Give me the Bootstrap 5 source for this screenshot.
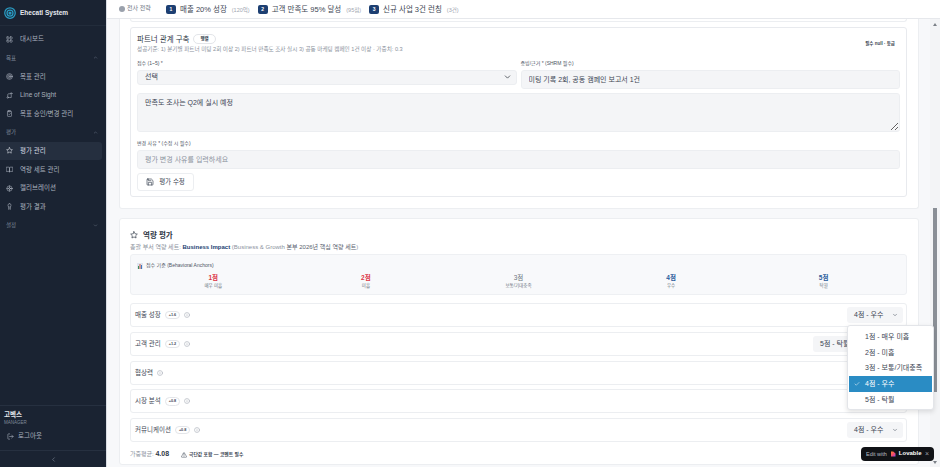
<!DOCTYPE html>
<html lang="ko">
<head>
  <meta charset="UTF-8" />
  <meta name="viewport" content="width=device-width, initial-scale=1" />
  <title>Ehecatl System</title>
  <link href="https://cdn.jsdelivr.net/npm/bootstrap@5.3.0/dist/css/bootstrap.min.css" rel="stylesheet" />
  <style>
    html, body { height: 467px; overflow: hidden; }
    body { font-family: "Liberation Sans", "Noto Sans CJK KR", sans-serif; font-size: 7px; color: #2a3342; background: #f7f8fa; line-height: 1.2; }
    svg.ico { fill: none; stroke: currentColor; stroke-width: 2; stroke-linecap: round; stroke-linejoin: round; flex: none; }

    /* sidebar */
    .side { width: 106px; flex: none; background: #1a2332; color: #aab2be; border-right: 1px solid #d9dde3; box-sizing: content-box; }
    .side-brand { height: 26px; padding-left: 4px; gap: 4px; border-bottom: 1px solid #222c3b; color: #e6e9ee; font-weight: 700; font-size: 6.5px; }
    .side-nav { padding-top: 4px; }
    .side-item { height: 18.6px; padding-left: 6px; gap: 7px; font-size: 6.5px; margin-right: 4px; }
    .side-item.on { background: #252f3f; border-radius: 0 3px 3px 0; color: #d5dae2; }
    .side-group { height: 18.6px; padding: 0 8px 0 6px; font-size: 5.5px; color: #7f8a9a; }
    .side-user { border-top: 1px solid #263040; padding: 5px 4px 0; }
    .side-name { color: #e3e7ed; font-size: 6.5px; font-weight: 700; }
    .side-role { color: #7f8a9a; font-size: 4.5px; margin-top: 1px; }
    .side-out { height: 18px; padding-left: 3px; gap: 4px; font-size: 6.5px; margin-top: 2px; margin-bottom: 5px; }
    .side-foot { border-top: 1px solid #263040; height: 17px; color: #7f8a9a; }

    /* top strip */
    .strip { height: 19px; flex: none; background: #fff; border-bottom: 1px solid #e6e8ec; padding-left: 12px; font-size: 7.5px; color: #3d4654; }
    .strip-dot { width: 6px; height: 6px; border-radius: 50%; background: #9aa1ac; margin-right: 2px; }
    .strip-lead { font-size: 6px; color: #6d7582; width: 39px; }
    .strip-num { width: 10px; height: 9px; border-radius: 2px; background: #1d3f72; color: #fff; font-size: 5px; font-weight: 700; margin-right: 4px; }
    .strip-goal { margin-right: 8px; }
    .strip-goal span { color: #a0a6b0; font-size: 5.5px; margin-left: 5px; }

    /* page */
    .scroll-area { min-height: 0; }
    .pane { padding: 0 0 0 12px; width: 823px; flex: none; }
    .outer { background: #fff; border: 1px solid #eceef1; border-radius: 3px; width: 800px; padding: 0 11px 0 10px; }
    .outer-a { border-top: 0; height: 190px; border-radius: 0 0 3px 3px; }
    .outer-b { margin-top: 9px; height: 247px; padding-top: 10px; }
    .stub { height: 3px; border: 1px solid #eceef1; border-top: 0; border-radius: 0 0 3px 3px; margin-bottom: 5px; }
    .inner { border: 1px solid #e8eaee; border-radius: 3px; height: 170px; padding: 6px 6px 0; position: relative; }
    .goal-title { font-size: 7.5px; color: #2f3846; gap: 4px; height: 10px; }
    .pill { border: 1px solid #e3e5e9; border-radius: 8px; font-size: 4.5px; padding: 1px 6px; font-weight: 700; color: #3d4654; }
    .goal-note { font-size: 5.6px; color: #8b929d; margin-top: 2px; }
    .goal-right { position: absolute; right: 11px; top: 13px; font-size: 4.5px; font-weight: 700; color: #3d4654; }
    .tiny-label { font-size: 5px; color: #4d5563; margin: 0; height: 7px; line-height: 7px; }
    .fields { margin-top: 7px; gap: 4px; }
    .fields > div { width: 380px; }
    .form-select.fld, .form-control.fld { background-color: #f4f5f7; border: 1px solid #eceef1; border-radius: 3px; font-size: 7px; color: #3d4654; padding: 0 7px; box-shadow: none; line-height: 1.2; }
    .form-select.fld { height: 15px; margin-top: 3px; background-size: 7px 6px; background-position: right 5px center; }
    .form-control.fld.tall { height: 19px; margin-top: 3px; }
    textarea.form-control.fld { height: 39px; min-height: 0; padding-top: 5px; margin-top: 1px; }
    .form-control.fld::placeholder { color: #8d94a0; }
    .change-label { margin-top: 8px; }
    .btn.save { height: 18px; width: 57px; margin-top: 4px; padding: 0; border: 1px solid #eceef1; background: #fff; color: #3d4654; font-size: 6.5px; border-radius: 3px; gap: 5px; }

    .rate-head { font-size: 7.5px; font-weight: 700; color: #2f3846; gap: 5px; height: 12px; }
    .rate-sub { font-size: 6px; color: #8b929d; margin-top: 2px; height: 8px; line-height: 8px; }
    .rate-sub b { color: #1d3f72; }
    .rate-sub i { font-style: normal; color: #59616e; }
    .anchors { margin-top: 3px; height: 41px; background: #f8f9fb; border: 1px solid #eef0f3; border-radius: 3px; padding: 7px 6px 0; }
    .anchors-title { font-size: 5px; color: #4d5563; gap: 3px; height: 7px; line-height: 7px; }
    .anchor-col { text-align: center; margin-top: 5px; }
    .anchor-score { font-size: 6.5px; font-weight: 700; height: 8px; line-height: 8px; }
    .anchor-name { font-size: 4.5px; color: #6d7582; height: 8px; line-height: 8px; }
    .skills { margin-top: 8px; gap: 4.8px; }
    .skill { height: 24px; border: 1px solid #eceef1; border-radius: 3px; padding: 0 3px 0 4px; font-size: 6.5px; color: #3d4654; gap: 4px; }
    .skill-w { border: 1px solid #e3e5e9; border-radius: 5px; font-size: 3.8px; font-weight: 700; padding: 1px 3px; }
    .skill-info { color: #9aa1ac; }
    .pick { margin-left: auto; width: 56px; height: 16px; background: #f4f5f7; border-radius: 3px; padding: 0 5px 0 7px; font-size: 7px; }
    .pick.wide { width: 90px; }
    .avg { margin-top: 8px; font-size: 6px; color: #8b929d; gap: 12px; height: 9px; }
    .avg b { font-size: 7px; color: #2f3846; }
    .avg-warn { font-size: 4.8px; font-weight: 700; color: #3d4654; gap: 2px; }

    /* fake scrollbar */
    .vbar { width: 10px; flex: none; margin-left: auto; background: #f3f4f6; position: relative; }
    .vbar-thumb { position: absolute; left: 3px; top: 189px; width: 4px; height: 184px; background: #8a8f96; }
    .vbar-up, .vbar-down { position: absolute; left: 3px; width: 0; height: 0; border-left: 2px solid transparent; border-right: 2px solid transparent; }
    .vbar-up { top: 4px; border-bottom: 3px solid #7b8087; }
    .vbar-down { bottom: 3px; border-top: 3px solid #7b8087; }

    /* open dropdown over the rows */
    .pick-menu { position: absolute; left: 847px; top: 325px; width: 87px; height: 85px; background: #fff; border: 1px solid #e3e5e9; border-radius: 3px; box-shadow: 0 2px 5px rgba(0,0,0,.12); padding: 3px 1px; z-index: 5; font-size: 7px; color: #3d4654; }
    .pick-opt { height: 15.8px; padding-left: 16px; position: relative; }
    .pick-opt.on { background: #2a8cc4; color: #fff; }
    .pick-opt svg { position: absolute; left: 5px; top: 5px; }
    .edit-badge { position: absolute; left: 861px; top: 447px; width: 73px; height: 14px; background: #101216; border-radius: 4px; color: #b9bdc4; font-size: 5.5px; padding: 0 5px; z-index: 6; gap: 3px; white-space: nowrap; }
    .edit-badge b { color: #fff; font-size: 6px; }
    .edit-x { margin-left: auto; color: #9a9ea5; font-size: 7px; }
  </style>
</head>
<body>
  <svg width="0" height="0" class="position-absolute">
    <symbol id="i-dash" viewBox="0 0 24 24"><rect x="3" y="3" width="7" height="7" rx="1"/><rect x="14" y="3" width="7" height="7" rx="1"/><rect x="3" y="14" width="7" height="7" rx="1"/><rect x="14" y="14" width="7" height="7" rx="1"/></symbol>
    <symbol id="i-target" viewBox="0 0 24 24"><circle cx="12" cy="12" r="10"/><circle cx="12" cy="12" r="6"/><circle cx="12" cy="12" r="2"/></symbol>
    <symbol id="i-sight" viewBox="0 0 24 24"><circle cx="6" cy="19" r="2.5"/><circle cx="18" cy="5" r="2.5"/><path d="M6 16V9a3 3 0 0 1 3-3h6"/><path d="M12 19h6v-9"/></symbol>
    <symbol id="i-file" viewBox="0 0 24 24"><rect x="5" y="4" width="14" height="18" rx="2"/><path d="M9 2h6v4H9z"/><path d="m9 14 2 2 4-4"/></symbol>
    <symbol id="i-star" viewBox="0 0 24 24"><path d="m12 2 3.1 6.3 6.9 1-5 4.9 1.2 6.8-6.2-3.2L5.8 21 7 14.200l-5-4.900 6.900-1z"/></symbol>
    <symbol id="i-book" viewBox="0 0 24 24"><path d="M2 4h7a3 3 0 0 1 3 3v14a2.500 2.500 0 0 0-2.500-2.500H2z"/><path d="M22 4h-7a3 3 0 0 0-3 3v14a2.500 2.500 0 0 1 2.500-2.500H22z"/></symbol>
    <symbol id="i-calib" viewBox="0 0 24 24"><circle cx="12" cy="12" r="9"/><circle cx="12" cy="12" r="3"/><path d="M3 12h6M15 12h6M12 3v6M12 15v6"/></symbol>
    <symbol id="i-award" viewBox="0 0 24 24"><rect x="7" y="2" width="10" height="12" rx="5"/><path d="M9 14v8l3-2 3 2v-8"/></symbol>
    <symbol id="i-up" viewBox="0 0 24 24"><path d="m6 15 6-6 6 6"/></symbol>
    <symbol id="i-down" viewBox="0 0 24 24"><path d="m6 9 6 6 6-6"/></symbol>
    <symbol id="i-left" viewBox="0 0 24 24"><path d="m15 18-6-6 6-6"/></symbol>
    <symbol id="i-out" viewBox="0 0 24 24"><path d="M9 21H5a2 2 0 0 1-2-2V5a2 2 0 0 1 2-2h4"/><path d="m16 17 5-5-5-5"/><path d="M21 12H9"/></symbol>
    <symbol id="i-save" viewBox="0 0 24 24"><path d="M5 3h11l5 5v11a2 2 0 0 1-2 2H5a2 2 0 0 1-2-2V5a2 2 0 0 1 2-2z"/><path d="M17 21v-8H7v8"/><path d="M7 3v5h8"/></symbol>
    <symbol id="i-info" viewBox="0 0 24 24"><circle cx="12" cy="12" r="10"/><path d="M12 16v-4M12 8h.01"/></symbol>
    <symbol id="i-warn" viewBox="0 0 24 24"><path d="M10.300 4 2 18a2 2 0 0 0 1.700 3h16.600a2 2 0 0 0 1.700-3L13.700 4a2 2 0 0 0-3.400 0z"/><path d="M12 9v4M12 17h.01"/></symbol>
    <symbol id="i-check" viewBox="0 0 24 24"><path d="M20 6 9 17l-5-5"/></symbol>
  </svg>

  <div class="d-flex h-100">
    <!-- Sidebar -->
    <aside class="side d-flex flex-column">
      <div class="side-brand d-flex align-items-center">
        <svg width="12" height="12" viewBox="0 0 24 24" fill="none" stroke="#2a9cc4" stroke-width="2.500"><circle cx="12" cy="12" r="10.500"/><circle cx="12" cy="12" r="6"/><circle cx="12" cy="12" r="2" fill="#2a9cc4"/></svg>
        Ehecatl System
      </div>
      <nav class="side-nav flex-grow-1">
        <div class="side-item d-flex align-items-center"><svg class="ico" width="7" height="7"><use href="#i-dash"/></svg>대시보드</div>
        <div class="side-group d-flex align-items-center justify-content-between">목표<svg class="ico" width="5" height="5"><use href="#i-up"/></svg></div>
        <div class="side-item d-flex align-items-center"><svg class="ico" width="7" height="7"><use href="#i-target"/></svg>목표 관리</div>
        <div class="side-item d-flex align-items-center"><svg class="ico" width="7" height="7"><use href="#i-sight"/></svg>Line of Sight</div>
        <div class="side-item d-flex align-items-center"><svg class="ico" width="7" height="7"><use href="#i-file"/></svg>목표 승인/변경 관리</div>
        <div class="side-group d-flex align-items-center justify-content-between">평가<svg class="ico" width="5" height="5"><use href="#i-up"/></svg></div>
        <div class="side-item on d-flex align-items-center"><svg class="ico" width="7" height="7"><use href="#i-star"/></svg>평가 관리</div>
        <div class="side-item d-flex align-items-center"><svg class="ico" width="7" height="7"><use href="#i-book"/></svg>역량 세트 관리</div>
        <div class="side-item d-flex align-items-center"><svg class="ico" width="7" height="7"><use href="#i-calib"/></svg>캘리브레이션</div>
        <div class="side-item d-flex align-items-center"><svg class="ico" width="7" height="7"><use href="#i-award"/></svg>평가 결과</div>
        <div class="side-group d-flex align-items-center justify-content-between">설정<svg class="ico" width="5" height="5"><use href="#i-down"/></svg></div>
      </nav>
      <div class="side-user">
        <div class="side-name">고벡스</div>
        <div class="side-role">MANAGER</div>
        <div class="side-out d-flex align-items-center"><svg class="ico" width="7" height="7"><use href="#i-out"/></svg>로그아웃</div>
      </div>
      <div class="side-foot d-flex align-items-center justify-content-center"><svg class="ico" width="7" height="7"><use href="#i-left"/></svg></div>
    </aside>

    <div class="flex-grow-1 d-flex flex-column" style="min-width:0">
      <!-- Strategy strip -->
      <div class="strip d-flex align-items-center">
        <span class="strip-dot"></span><span class="strip-lead">전사 전략</span>
        <span class="strip-num d-flex align-items-center justify-content-center">1</span><span class="strip-goal">매출 20% 성장<span>(120억)</span></span>
        <span class="strip-num d-flex align-items-center justify-content-center">2</span><span class="strip-goal">고객 만족도 95% 달성<span>(95점)</span></span>
        <span class="strip-num d-flex align-items-center justify-content-center">3</span><span class="strip-goal">신규 사업 3건 런칭<span>(3건)</span></span>
      </div>

      <div class="scroll-area flex-grow-1 d-flex">
        <main class="pane">
          <!-- Goal evaluation card -->
          <section class="outer outer-a">
            <div class="stub"></div>
            <div class="inner">
              <div class="goal-title d-flex align-items-center">파트너 관계 구축 <span class="pill">행렬</span></div>
              <div class="goal-note">성공기준: 1) 분기별 파트너 미팅 2회 이상 2) 파트너 만족도 조사 실시 3) 공동 마케팅 캠페인 1건 이상 · 가중치: 0.3</div>
              <div class="goal-right">필수 null · 등급</div>
              <div class="fields d-flex">
                <div>
                  <label class="tiny-label d-block">점수 (1~5) *</label>
                  <select class="form-select fld"><option>선택</option></select>
                </div>
                <div>
                  <label class="tiny-label d-block">증빙/근거 * (SHRM 필수)</label>
                  <input class="form-control fld tall" value="미팅 기록 2회, 공동 캠페인 보고서 1건" />
                </div>
              </div>
              <textarea class="form-control fld mt-1">만족도 조사는 Q2에 실시 예정</textarea>
              <label class="tiny-label d-block change-label">변경 사유 * (수정 시 필수)</label>
              <input class="form-control fld tall" placeholder="평가 변경 사유를 입력하세요" />
              <button class="btn save d-flex align-items-center justify-content-center"><svg class="ico" width="8" height="8"><use href="#i-save"/></svg>평가 수정</button>
            </div>
          </section>

          <!-- Competency evaluation card -->
          <section class="outer outer-b">
            <div class="rate-head d-flex align-items-center"><svg class="ico" width="8" height="8"><use href="#i-star"/></svg>역량 평가</div>
            <div class="rate-sub">총괄 부서 역량 세트: <b>Business Impact</b> (Business &amp; Growth <i>본부 2026년 핵심 역량 세트</i>)</div>
            <div class="anchors">
              <div class="anchors-title d-flex align-items-center">
                <svg width="6" height="6" viewBox="0 0 6 6"><rect width="6" height="6" fill="#dfe6f0"/><rect x="1" y="3" width="1" height="3" fill="#3f8f5f"/><rect x="2.500" y="1" width="1" height="5" fill="#c9503f"/><rect x="4" y="2" width="1" height="4" fill="#3b78c4"/></svg>
                점수 기준 (Behavioral Anchors)
              </div>
              <div class="row g-0">
                <div class="col anchor-col"><div class="anchor-score text-danger">1점</div><div class="anchor-name">매우 미흡</div></div>
                <div class="col anchor-col"><div class="anchor-score text-danger">2점</div><div class="anchor-name">미흡</div></div>
                <div class="col anchor-col"><div class="anchor-score text-secondary fw-normal">3점</div><div class="anchor-name">보통/기대충족</div></div>
                <div class="col anchor-col"><div class="anchor-score" style="color:#2a5c9c">4점</div><div class="anchor-name">우수</div></div>
                <div class="col anchor-col"><div class="anchor-score" style="color:#2a5c9c">5점</div><div class="anchor-name">탁월</div></div>
              </div>
            </div>
            <div class="skills d-flex flex-column">
              <div class="skill d-flex align-items-center">매출 성장 <span class="skill-w">+1.6</span><svg class="ico skill-info" width="6" height="6"><use href="#i-info"/></svg>
                <div class="pick d-flex align-items-center justify-content-between">4점 - 우수<svg class="ico" width="6" height="6"><use href="#i-down"/></svg></div></div>
              <div class="skill d-flex align-items-center">고객 관리 <span class="skill-w">+1.2</span><svg class="ico skill-info" width="6" height="6"><use href="#i-info"/></svg>
                <div class="pick wide d-flex align-items-center">5점 - 탁월</div></div>
              <div class="skill d-flex align-items-center">협상력 <svg class="ico skill-info" width="6" height="6"><use href="#i-info"/></svg></div>
              <div class="skill d-flex align-items-center">시장 분석 <span class="skill-w">+0.8</span><svg class="ico skill-info" width="6" height="6"><use href="#i-info"/></svg></div>
              <div class="skill d-flex align-items-center">커뮤니케이션 <span class="skill-w">+0.8</span><svg class="ico skill-info" width="6" height="6"><use href="#i-info"/></svg>
                <div class="pick d-flex align-items-center justify-content-between">4점 - 우수<svg class="ico" width="6" height="6"><use href="#i-down"/></svg></div></div>
            </div>
            <div class="avg d-flex align-items-center">
              <span>가중평균: <b>4.08</b></span>
              <span class="avg-warn d-flex align-items-center"><svg class="ico" width="6" height="6"><use href="#i-warn"/></svg>극단값 포함 — 코멘트 필수</span>
            </div>
          </section>
        </main>
        <div class="vbar"><span class="vbar-up"></span><span class="vbar-thumb"></span><span class="vbar-down"></span></div>
      </div>
    </div>
  </div>

  <!-- Open score dropdown -->
  <div class="pick-menu">
    <div class="pick-opt d-flex align-items-center">1점 - 매우 미흡</div>
    <div class="pick-opt d-flex align-items-center">2점 - 미흡</div>
    <div class="pick-opt d-flex align-items-center">3점 - 보통/기대충족</div>
    <div class="pick-opt on d-flex align-items-center"><svg class="ico" width="6" height="6"><use href="#i-check"/></svg>4점 - 우수</div>
    <div class="pick-opt d-flex align-items-center">5점 - 탁월</div>
  </div>

  <!-- Lovable badge -->
  <div class="edit-badge d-flex align-items-center">
    <span>Edit with</span>
    <svg width="6" height="6" viewBox="0 0 24 24" class="flex-none"><defs><linearGradient id="lov" x1="0" y1="0" x2="1" y2="1"><stop offset="0" stop-color="#ff8a2b"/><stop offset=".6" stop-color="#f0417a"/><stop offset="1" stop-color="#7a5cf0"/></linearGradient></defs><path fill="url(#lov)" d="M4 2h7a7 7 0 0 1 6 3.500A6 6 0 0 1 22 12v10H4z"/></svg>
    <b>Lovable</b>
    <span class="edit-x">×</span>
  </div>

  <script src="https://cdn.jsdelivr.net/npm/bootstrap@5.3.0/dist/js/bootstrap.bundle.min.js"></script>
</body>
</html>
